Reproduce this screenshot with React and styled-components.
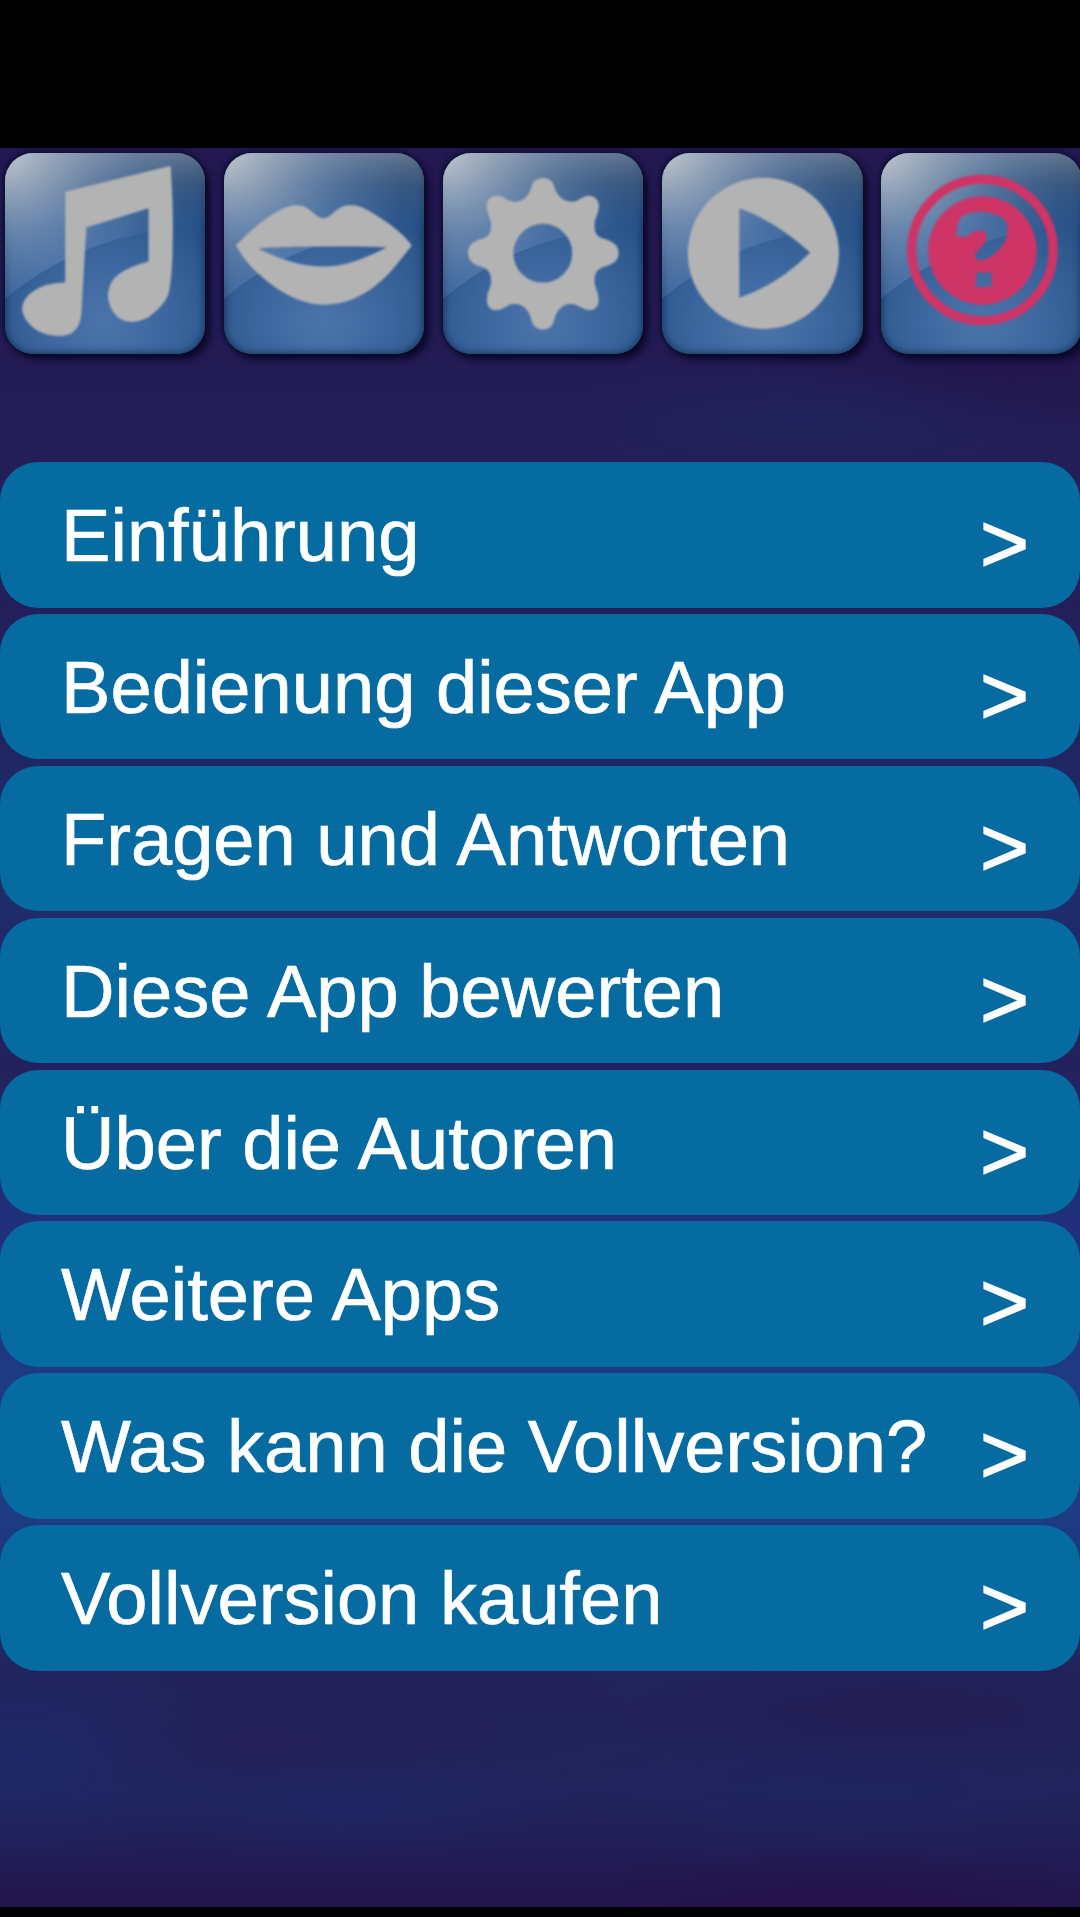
import React from "react";
import styled, { createGlobalStyle } from "styled-components";

const GlobalStyle = createGlobalStyle`
  html, body { margin: 0; background: #000; }
  * { box-sizing: border-box; }
`;

const Screen = styled.div`
  width: 1080px;
  height: 1917px;
  padding: 148px 0 10px;
  background: #000;
  overflow: hidden;
  font-family: "Liberation Sans", Arial, sans-serif;
`;

const Sky = styled.main`
  height: 1759px;
  overflow: hidden;
  background:
    radial-gradient(ellipse 260px 60px at 800px 275px, #1e265faa 0%, transparent 100%),
    radial-gradient(ellipse 260px 80px at 1010px 210px, #22124aaa 0%, transparent 100%),
    radial-gradient(ellipse 220px 120px at 20px 1610px, #1c2a6acc 0%, transparent 100%),
    radial-gradient(ellipse 260px 60px at 340px 1655px, #1d2866bb 0%, transparent 100%),
    radial-gradient(ellipse 260px 50px at 840px 1750px, #241048aa 0%, transparent 100%),
    radial-gradient(ellipse 340px 80px at 840px 1640px, #1e2560bb 0%, transparent 100%),
    radial-gradient(ellipse 260px 80px at 880px 1570px, #241a50aa 0%, transparent 100%),
    radial-gradient(ellipse 260px 50px at 800px 1535px, #1f275f88 0%, transparent 100%),
    radial-gradient(ellipse 240px 60px at 270px 1600px, #251d55aa 0%, transparent 100%),
    linear-gradient(#23184f 0, #231b53 180px, #241e57 300px, #231f5a 470px, #202764 620px,
      #1f2c6c 760px, #23215d 915px, #20307a 1070px, #1e3a80 1220px, #1e3c82 1370px,
      #1f2f70 1460px, #222259 1530px, #21235b 1640px, #221d56 1700px, #23154d 1759px);
`;

const Toolbar = styled.nav`
  display: flex;
  gap: 18.3px;
  padding: 4.5px 0 0 4.5px;
  width: 1100px;
`;

const Tile = styled.button`
  flex: none;
  width: 200.8px;
  height: 201px;
  padding: 0;
  border: 0;
  border-radius: 28px;
  color: ${(p) => (p.$active ? "#cf3466" : "#b3b3b3")};
  background: radial-gradient(circle at 50% 84%, #4b74ab 0%, #3a659c 36%, #244e84 74%, #1e4576 100%);
  box-shadow: 5px 6px 7px 0 rgba(8, 6, 34, 0.85), -1px -1px 4px 1px rgba(5, 14, 46, 0.8);
`;

const Art = styled.svg`
  display: block;
  width: 200.8px;
  height: 201px;
  border-radius: 28px;
  box-shadow: inset 0 0 6px 2px rgba(22, 52, 90, 0.8);
`;

const Glyph = styled.g`
  filter: blur(0.8px);
`;

const Menu = styled.ul`
  display: flex;
  flex-direction: column;
  gap: 6.4px;
  margin: 108.5px 0 0;
  padding: 0;
  list-style: none;
`;

const Row = styled.li`
  display: flex;
  justify-content: space-between;
  height: 145.5px;
  padding: 0 51px 0 61px;
  border-radius: 38px;
  background: #056ba1;
  color: #fff;
  white-space: nowrap;
`;

const Label = styled.span`
  font-size: 74.1px;
  line-height: 147px;
  -webkit-text-stroke: 0.7px #fff;
`;

const Chevron = styled.span`
  font-size: 84px;
  line-height: 162px;
  height: 145px;
  -webkit-text-stroke: 1.4px #fff;
`;

const Icons = {
  music: (
    <path
      fill="currentColor"
      d="M60 38.500 L165 12.500 Q168 60 167 90 Q167 120 163 140 Q158 153 142 164 Q118 175 107 157 Q101 146 103 137 Q105 127 113 121 Q123 113 143 108 L143 55 L81 74 L76 161 Q75 173 67 179 Q60 183 50 182 Q37 181 28 174 Q18 165 17 156 Q17 146 26 139 Q39 129 60 129 Z"
    />
  ),
  lips: (
    <path
      fill="currentColor"
      fillRule="evenodd"
      d="M12 92 C20 83 32 72 44 64 C54 57 64 52 71 52 C86 51 88 63 99 65 C110 63 112 51 127 52 C137 52 144 57 164 70 C172 76 181 83 187 92 C176 106 168 117 157 127 C138 144 120 151 99 151 C80 151 58 142 34 120 C25 112 18 103 12 92 Z M34 95 C55 105 75 113 99 113 C124 113 143 103 162 94 C142 92.500 55 92.500 34 95 Z"
    />
  ),
  gear: (
    <path
      transform="translate(0.9 -0.6)"
      fill="currentColor"
      fillRule="evenodd"
      d="M87.500 33 C90 23 107 23 109.500 33 C112 43 119 49 128 49 C134 49 138 43 144 43 C152 43 156 50 154 57 C153 63 150 66 150 73 C150 81 153 84 159 86 C166 88 174 91 174 100 C174 109 166 112 159 114 C153 116 150 120 150 128 C150 135 154 139 154 146 C155 153 150 158 144 157 C138 157 134 151 127 151 C118 151 112 157 109.500 168 C107 179 90 179 87.500 168 C85 157 79 151 70 151 C63 151 59 157 53 157 C46 158 42 152 43 145 C43 139 47 135 47 128 C47 120 44 116 38 114 C31 112 24 109 24 100 C24 91 31 88 38 86 C44 84 47 81 47 73 C47 66 44 63 43 57 C41 49 45 43 53 43 C60 43 63 49 70 49 C79 49 85 43 87.500 33 Z M98.500 71 A29.300 29.300 0 1 0 98.500 129.600 A29.300 29.300 0 1 0 98.500 71 Z"
    />
  ),
  play: (
    <path
      fill="currentColor"
      fillRule="evenodd"
      d="M101 24.500 A75.300 75.300 0 1 0 101 175.100 A75.300 75.300 0 1 0 101 24.500 Z M77 55 Q112 67 147.500 99 Q116 131 77 144 Z"
    />
  ),
  help: (
    <>
      <circle cx="101" cy="96.500" r="70.500" fill="none" stroke="currentColor" strokeWidth="9" />
      <path
        fill="currentColor"
        fillRule="evenodd"
        d="M101 43 A54 54 0 1 0 101 151 A54 54 0 1 0 101 43 Z M74.500 82 C75 75 77 68 80 63 C92 56 116 56 126 70 C126 80 125 87 121 92 C115 99 108 106 98.500 107 C95 107 93 104 94 100 C98 94 105 91 105 84 C105 79 103 77 100 77 C94 76 90 80 84 84 Z M95 119 H110 V133 H94 Z"
      />
    </>
  ),
};

const toolbarItems = ["music", "lips", "gear", "play", "help"];

const menuItems = [
  "Einführung",
  "Bedienung dieser App",
  "Fragen und Antworten",
  "Diese App bewerten",
  "Über die Autoren",
  "Weitere Apps",
  "Was kann die Vollversion?",
  "Vollversion kaufen",
];

function GlossyTile({ name, active }) {
  const glow = `${name}-glow`;
  const shade = `${name}-shade`;
  const gloss = "M0 0 H200 V73 Q82 76 0 145 Z";
  return (
    <Tile $active={active} aria-label={name}>
      <Art viewBox="0 0 200 200">
        <defs>
          <radialGradient id={glow} gradientUnits="userSpaceOnUse" cx="0" cy="0" r="185">
            <stop offset="0" stopColor="#c3c9cf" stopOpacity="0.95" />
            <stop offset="0.35" stopColor="#a3b3c8" stopOpacity="0.62" />
            <stop offset="0.7" stopColor="#7c9cc6" stopOpacity="0.28" />
            <stop offset="1" stopColor="#5f86b8" stopOpacity="0.03" />
          </radialGradient>
          <linearGradient id={shade} x1="0" y1="0" x2="0" y2="1">
            <stop offset="0" stopColor="#828c97" stopOpacity="0.7" />
            <stop offset="0.22" stopColor="#56677c" stopOpacity="0.4" />
            <stop offset="0.5" stopColor="#4a6a94" stopOpacity="0" />
          </linearGradient>
        </defs>
        <path d={gloss} fill={`url(#${shade})`} />
        <path d={gloss} fill={`url(#${glow})`} />
        <Glyph>{Icons[name]}</Glyph>
      </Art>
    </Tile>
  );
}

export default function App() {
  return (
    <Screen>
      <GlobalStyle />
      <Sky>
        <Toolbar>
          {toolbarItems.map((name) => (
            <GlossyTile key={name} name={name} active={name === "help"} />
          ))}
        </Toolbar>
        <Menu>
          {menuItems.map((item) => (
            <Row key={item}>
              <Label>{item}</Label>
              <Chevron>&gt;</Chevron>
            </Row>
          ))}
        </Menu>
      </Sky>
    </Screen>
  );
}
